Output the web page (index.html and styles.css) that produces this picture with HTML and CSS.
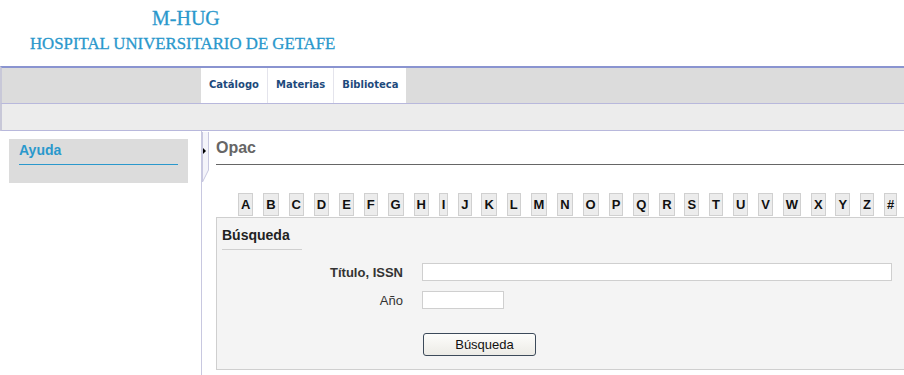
FILE: index.html
```html
<!DOCTYPE html>
<html lang="es">
<head>
<meta charset="utf-8">
<title>M-HUG Opac</title>
<link rel="stylesheet" href="styles.css">
</head>
<body>
<header class="brand">
  <div class="brand-name">M-HUG</div>
  <div class="brand-sub">HOSPITAL UNIVERSITARIO DE GETAFE</div>
</header>
<nav class="topnav">
  <ul class="tabs">
    <li class="tab">Catálogo</li>
    <li class="tab">Materias</li>
    <li class="tab">Biblioteca</li>
  </ul>
</nav>
<div class="subbar"></div>
<div class="layout">
  <aside class="sidebar">
    <div class="side-box">
      <div class="side-title">Ayuda</div>
    </div>
  </aside>
  <main class="content">
    <svg class="toggle" width="8" height="50" viewBox="0 0 8 50">
      <path d="M0.5 0 V50 L6.5 38 V0" fill="#f4f4fa" stroke="#c8c8e0" stroke-width="1"/>
      <path d="M1 16 L4 19 L1 22 Z" fill="#000"/>
    </svg>
    <h1 class="page-title">Opac</h1>
    <div class="letters">
      <span class="letter">A</span><span class="letter">B</span><span class="letter">C</span><span class="letter">D</span><span class="letter">E</span><span class="letter">F</span><span class="letter">G</span><span class="letter">H</span><span class="letter">I</span><span class="letter">J</span><span class="letter">K</span><span class="letter">L</span><span class="letter">M</span><span class="letter">N</span><span class="letter">O</span><span class="letter">P</span><span class="letter">Q</span><span class="letter">R</span><span class="letter">S</span><span class="letter">T</span><span class="letter">U</span><span class="letter">V</span><span class="letter">W</span><span class="letter">X</span><span class="letter">Y</span><span class="letter">Z</span><span class="letter">#</span>
    </div>
    <section class="search">
      <h2 class="search-title">Búsqueda</h2>
      <div class="form">
        <div class="row">
          <label class="label strong">Título, ISSN</label>
          <input class="field wide" type="text">
        </div>
        <div class="row">
          <label class="label">Año</label>
          <input class="field short" type="text">
        </div>
        <div class="row btn-row">
          <span class="label"></span>
          <button class="btn" type="button">Búsqueda</button>
        </div>
      </div>
    </section>
  </main>
</div>
</body>
</html>
```
FILE: styles.css
```css
* { box-sizing: border-box; }
html, body { margin: 0; padding: 0; background: #fff; overflow: hidden; }
body { font-family: "Liberation Sans", Arial, sans-serif; width: 904px; height: 375px; }

.brand { height: 66px; padding-top: 7px; }
.brand-name {
  font-family: "Liberation Serif", "Times New Roman", serif;
  color: #2a98cc; font-size: 20px; text-align: left;
  padding-left: 152px; line-height: 22px;
  -webkit-text-stroke: 0.3px #2a98cc;
}
.brand-sub {
  font-family: "Liberation Serif", "Times New Roman", serif;
  color: #2a98cc; font-size: 16.8px; padding-left: 30px; margin-top: 6px;
  line-height: 18px;
  -webkit-text-stroke: 0.3px #2a98cc;
}

.topnav {
  height: 38px; background: #dcdcdc;
  border-top: 2px solid #8a94d0; border-bottom: 1px solid #b8b8dc;
  border-left: 2px solid #c8c8d8;
  padding-left: 199px;
}
.tabs { list-style: none; margin: 0; padding: 0; display: flex; height: 35px; }
.tab {
  background: #fff; height: 35px; line-height: 34px;
  font-family: "DejaVu Sans", Verdana, sans-serif; font-weight: bold; font-size: 10px;
  color: #1d4a7c; padding: 0 8px 0 8px; border-right: 1px solid #e4e4ec;
}
.tab:last-child { border-right: none; }

.subbar {
  height: 27px; background: #ececec; border-bottom: 1px solid #b8b8dc;
  border-left: 2px solid #c8c8d8;
}

.layout { display: flex; height: 245px; }
.sidebar {
  flex: none; width: 202px; padding: 8px 13px 0 9px;
  border-right: 1px solid #c8c8e0;
}
.side-box { background: #dcdcdc; height: 44px; padding: 3px 10px 0 10px; }
.side-title {
  color: #2a98cc; font-weight: bold; font-size: 14px; line-height: 16px;
  padding-bottom: 6px; border-bottom: 1px solid #2a98cc;
}

.content { flex: 1; min-width: 0; position: relative; padding: 7px 0 0 14px; }
.toggle { position: absolute; left: 0; top: 1px; }
.page-title {
  margin: 0; font-size: 16px; font-weight: bold; color: #666;
  line-height: 20px; padding-bottom: 6px; border-bottom: 1px solid #666;
}

.letters { display: flex; gap: 9.9px; padding: 28px 0 0 22px; height: 52px; }
.letter {
  display: inline-block; height: 23px; line-height: 22px; padding: 0 2px;
  background: #ececec; border: 1px solid #d0d0d0;
  font-weight: bold; font-size: 13px; color: #111; text-align: center;
}

.search {
  background: #f4f4f4; border: 1px solid #cfcfcf; border-right: none;
  height: 153px; padding: 9px 0 0 5px;
}
.search-title {
  margin: 0; width: 80px; font-size: 14px; font-weight: bold; color: #222;
  line-height: 17px; padding-bottom: 5px; border-bottom: 1px solid #cfcfcf;
}
.form { padding-top: 13px; }
.row { display: flex; align-items: center; height: 18px; margin-bottom: 10px; }
.label { flex: none; width: 181px; text-align: right; font-size: 13px; color: #333; margin-right: 19px; }
.label.strong { font-weight: bold; }
.field { flex: none; height: 18px; border: 1px solid #cfcfcf; background: #fff; padding: 0; }
.wide { width: 470px; }
.short { width: 82px; }
.btn-row { margin-top: 24px; height: 23px; }
.btn {
  flex: none; margin-left: 1px; width: 113px; height: 23px;
  border: 1px solid #3c4a5a; border-radius: 3px;
  background: linear-gradient(#fdfdfb, #ecebe6);
  font-family: "Liberation Sans", Arial, sans-serif; font-size: 13px; color: #111;
  padding: 0 0 0 10px;
}
```
